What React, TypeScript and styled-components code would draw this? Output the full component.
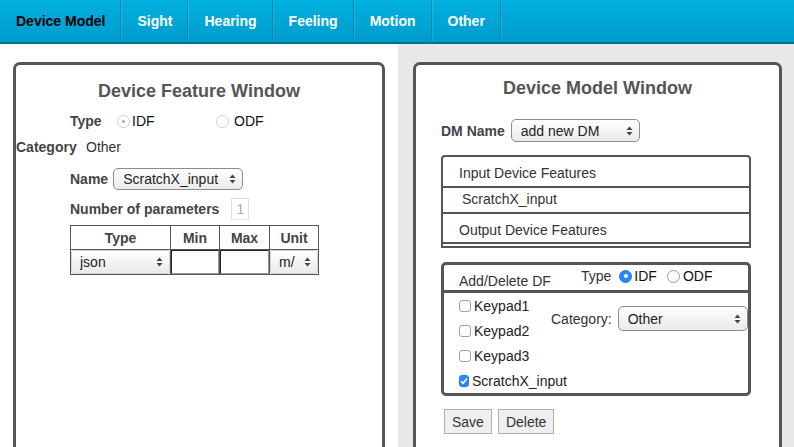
import React from "react";
import styled, { createGlobalStyle } from "styled-components";

const GlobalStyle = createGlobalStyle`
  html, body {
    margin: 0;
    padding: 0;
    overflow: hidden;
    background: #fff;
    font-family: "Liberation Sans", Arial, Helvetica, sans-serif;
    font-size: 14px;
    color: #222;
  }
  * { box-sizing: border-box; }
`;

const NavBar = styled.nav`
  display: flex;
  height: 44px;
  background: linear-gradient(#00b1e0, #009ccc);
  border-bottom: 2px solid #00708f;
`;

const NavTab = styled.div<{ active?: boolean }>`
  display: flex;
  align-items: center;
  padding: 0 15px 0 16px;
  font-weight: bold;
  font-size: 14px;
  color: ${(p) => (p.active ? "#000" : "#fff")};
  border-right: 1px solid #0a86ad;
  box-shadow: 1px 0 0 rgba(255, 255, 255, 0.12);
`;

const Page = styled.div`
  display: flex;
  height: 403px;
  overflow: hidden;
`;

const LeftPane = styled.div`
  width: 398px;
  background: #fff;
  padding: 18px 0 0 13px;
`;

const RightPane = styled.div`
  flex: 1;
  background: #e8e8e8;
  padding: 18px 0 0 15px;
`;

const Panel = styled.section<{ w: number }>`
  width: ${(p) => p.w}px;
  min-height: 420px;
  background: #fff;
  border: 3px solid #555;
  border-radius: 7px 7px 0 0;
  border-bottom: none;
`;

const Title = styled.h2<{ top: number }>`
  margin: ${(p) => p.top}px 0 0 0;
  text-align: center;
  font-size: 18px;
  font-weight: bold;
  color: #555;
`;

const Row = styled.div<{ indent: number; top: number; gap?: number }>`
  display: flex;
  align-items: center;
  margin: ${(p) => p.top}px 0 0 ${(p) => p.indent}px;
  gap: ${(p) => p.gap ?? 0}px;
`;

const Label = styled.span<{ bold?: boolean; w?: number }>`
  font-weight: ${(p) => (p.bold ? "bold" : "normal")};
  color: ${(p) => (p.bold ? "#444" : "#333")};
  ${(p) => (p.w ? `width: ${p.w}px;` : "")}
`;

const RadioGroup = styled.label<{ w?: number; gap?: number }>`
  display: inline-flex;
  align-items: center;
  gap: ${(p) => p.gap ?? 2}px;
  color: #111;
  ${(p) => (p.w ? `width: ${p.w}px;` : "")}
`;

const RadioDot = styled.span<{ checked?: boolean; tone: "grey" | "blue" }>`
  position: relative;
  display: inline-block;
  width: 13px;
  height: 13px;
  border-radius: 50%;
  border: 1px solid ${(p) => (p.tone === "blue" && p.checked ? "#1a7cf5" : p.tone === "grey" ? "#cfcfcf" : "#9a9a9a")};
  background: ${(p) => (p.tone === "blue" && p.checked ? "#2a88fa" : "#fff")};
  &::after {
    content: "";
    display: ${(p) => (p.checked ? "block" : "none")};
    position: absolute;
    left: 50%;
    top: 50%;
    width: ${(p) => (p.tone === "blue" ? 4 : 3)}px;
    height: ${(p) => (p.tone === "blue" ? 4 : 3)}px;
    margin: -${(p) => (p.tone === "blue" ? 2 : 1.5)}px 0 0 -${(p) => (p.tone === "blue" ? 2 : 1.5)}px;
    border-radius: 50%;
    background: ${(p) => (p.tone === "blue" ? "#fff" : "#aaa")};
  }
`;

const SelectWrap = styled.span<{ w: number; h: number }>`
  position: relative;
  display: inline-block;
  width: ${(p) => p.w}px;
  height: ${(p) => p.h}px;
`;

const NativeSelect = styled.select<{ flat?: boolean }>`
  appearance: none;
  -webkit-appearance: none;
  width: 100%;
  height: 100%;
  margin: 0;
  border: 1px solid ${(p) => (p.flat ? "#d4d4d4" : "#8c8c8c")};
  border-radius: ${(p) => (p.flat ? 3 : 5)}px;
  background: linear-gradient(#ffffff, #eaeaea);
  font-family: "Liberation Sans", Arial, sans-serif;
  font-size: 14px;
  color: #222;
  padding: 0 20px 0 ${(p) => (p.flat ? 8 : 9)}px;
  outline: none;
`;

const Arrows = styled.svg`
  position: absolute;
  right: 7px;
  top: 50%;
  margin-top: -5px;
  pointer-events: none;
`;

const Select = ({ w, h, value, flat }: { w: number; h: number; value: string; flat?: boolean }) => (
  <SelectWrap w={w} h={h}>
    <NativeSelect flat={flat} defaultValue={value}>
      <option>{value}</option>
    </NativeSelect>
    <Arrows width="7" height="10" viewBox="0 0 7 10">
      <path d="M3.5 0.5 L6.5 4 H0.5 Z" fill="#444" />
      <path d="M3.5 9.5 L6.5 6 H0.5 Z" fill="#444" />
    </Arrows>
  </SelectWrap>
);

const CountBox = styled.span`
  display: inline-flex;
  align-items: center;
  justify-content: center;
  width: 18px;
  height: 22px;
  border: 1px solid #e0e0e0;
  color: #aaa;
  font-size: 14px;
`;

const ParamTable = styled.table`
  margin: 5px 0 0 54px;
  border-collapse: collapse;
  border: 1px solid #555;
`;

const Th = styled.th<{ w: number }>`
  width: ${(p) => p.w}px;
  height: 24px;
  border: 1px solid #555;
  font-weight: bold;
  color: #444;
  font-size: 14px;
  padding: 0;
`;

const Td = styled.td`
  height: 25px;
  border: 1px solid #555;
  padding: 0;
`;

const CellInput = styled.input`
  display: block;
  width: 100%;
  height: 24px;
  margin: 0;
  border: 1px solid #222;
  border-right-color: #999;
  border-bottom-color: #999;
  font-size: 14px;
`;

const ListBox = styled.div`
  margin: 13px 0 0 25px;
  width: 310px;
  border: 2px solid #555;
  border-radius: 4px 4px 0 0;
`;

const ListRow = styled.div<{ h: number; pad: number; last?: boolean }>`
  display: flex;
  align-items: flex-end;
  height: ${(p) => p.h}px;
  padding: 0 0 ${(p) => (p.last ? 4 : 5)}px ${(p) => p.pad}px;
  border-bottom: 2px solid #555;
  color: #333;
  line-height: 16px;
  ${(p) => (p.last ? "margin-bottom: 2px;" : "")}
`;

const DfBox = styled.div`
  margin: 14px 0 0 25px;
  width: 310px;
  border: 3px solid #555;
  border-radius: 5px;
`;

const DfHeader = styled.div`
  display: flex;
  align-items: center;
  height: 28px;
  padding-left: 15px;
  border-bottom: 3px solid #555;
`;

const DfTitle = styled.span`
  color: #333;
  margin-top: 7px;
  width: 122px;
`;

const DfType = styled.div`
  display: flex;
  align-items: center;
  margin-top: -3px;
  color: #333;
`;

const DfBody = styled.div`
  display: flex;
  padding: 0 0 0 15px;
`;

const CheckList = styled.div`
  display: flex;
  flex-direction: column;
  width: 92px;
`;

const CheckRow = styled.label`
  display: flex;
  align-items: center;
  height: 25px;
  gap: 3px;
  color: #222;
  white-space: nowrap;
`;

const CheckSquare = styled.span<{ checked?: boolean }>`
  display: inline-flex;
  align-items: center;
  justify-content: center;
  width: 12px;
  height: 12px;
  border-radius: 3px;
  border: 1px solid ${(p) => (p.checked ? "#1a7cf5" : "#a0a0a0")};
  background: ${(p) => (p.checked ? "#2a88fa" : "#fff")};
`;

const CategoryField = styled.div`
  display: flex;
  align-items: center;
  gap: 6px;
  height: 25px;
  margin-top: 13px;
  color: #333;
`;

const ButtonRow = styled.div`
  display: flex;
  gap: 6px;
  margin: 13px 0 0 28px;
`;

const Button = styled.button`
  height: 25px;
  padding: 0 7px;
  border: 1px solid #b0b0b0;
  background: #efefef;
  font-family: "Liberation Sans", Arial, sans-serif;
  font-size: 14px;
  color: #333;
`;

const Check = ({ label, checked }: { label: string; checked?: boolean }) => (
  <CheckRow>
    <CheckSquare checked={checked}>
      {checked && (
        <svg width="8" height="8" viewBox="0 0 8 8">
          <path d="M1 4.2 L3.1 6.3 L7 1.6" stroke="#fff" strokeWidth="1.6" fill="none" />
        </svg>
      )}
    </CheckSquare>
    {label}
  </CheckRow>
);

const tabs = ["Device Model", "Sight", "Hearing", "Feeling", "Motion", "Other"];

export default function App() {
  return (
    <>
      <GlobalStyle />
      <NavBar>
        {tabs.map((t, i) => (
          <NavTab key={t} active={i === 0}>
            {t}
          </NavTab>
        ))}
      </NavBar>
      <Page>
        <LeftPane>
          <Panel w={372}>
            <Title top={16}>Device Feature Window</Title>
            <Row indent={54} top={11}>
              <Label bold w={47}>Type</Label>
              <RadioGroup w={99}>
                <RadioDot tone="grey" checked />
                IDF
              </RadioGroup>
              <RadioGroup gap={5}>
                <RadioDot tone="grey" />
                ODF
              </RadioGroup>
            </Row>
            <Row indent={0} top={10}>
              <Label bold w={70}>Category</Label>
              <Label>Other</Label>
            </Row>
            <Row indent={54} top={13} gap={5}>
              <Label bold>Name</Label>
              <Select w={130} h={22} value="ScratchX_input" />
            </Row>
            <Row indent={54} top={8} gap={12}>
              <Label bold>Number of parameters</Label>
              <CountBox>1</CountBox>
            </Row>
            <ParamTable>
              <thead>
                <tr>
                  <Th w={100}>Type</Th>
                  <Th w={49}>Min</Th>
                  <Th w={50}>Max</Th>
                  <Th w={49}>Unit</Th>
                </tr>
              </thead>
              <tbody>
                <tr>
                  <Td>
                    <Select w={99} h={24} value="json" flat />
                  </Td>
                  <Td>
                    <CellInput />
                  </Td>
                  <Td>
                    <CellInput />
                  </Td>
                  <Td>
                    <Select w={48} h={24} value="m/" flat />
                  </Td>
                </tr>
              </tbody>
            </ParamTable>
          </Panel>
        </LeftPane>
        <RightPane>
          <Panel w={369}>
            <Title top={13}>Device Model Window</Title>
            <Row indent={25} top={20} gap={6}>
              <Label bold>DM Name</Label>
              <Select w={129} h={23} value="add new DM" />
            </Row>
            <ListBox>
              <ListRow h={31} pad={16}>Input Device Features</ListRow>
              <ListRow h={26} pad={19}>ScratchX_input</ListRow>
              <ListRow h={30} pad={16} last>Output Device Features</ListRow>
            </ListBox>
            <DfBox>
              <DfHeader>
                <DfTitle>Add/Delete DF</DfTitle>
                <DfType>
                  <span style={{ marginRight: 8 }}>Type</span>
                  <RadioGroup>
                    <RadioDot tone="blue" checked />
                    IDF
                  </RadioGroup>
                  <RadioGroup gap={3} style={{ marginLeft: 10 }}>
                    <RadioDot tone="blue" />
                    ODF
                  </RadioGroup>
                </DfType>
              </DfHeader>
              <DfBody>
                <CheckList>
                  <Check label="Keypad1" />
                  <Check label="Keypad2" />
                  <Check label="Keypad3" />
                  <Check label="ScratchX_input" checked />
                </CheckList>
                <CategoryField>
                  Category:
                  <Select w={130} h={25} value="Other" />
                </CategoryField>
              </DfBody>
            </DfBox>
            <ButtonRow>
              <Button>Save</Button>
              <Button>Delete</Button>
            </ButtonRow>
          </Panel>
        </RightPane>
      </Page>
    </>
  );
}
